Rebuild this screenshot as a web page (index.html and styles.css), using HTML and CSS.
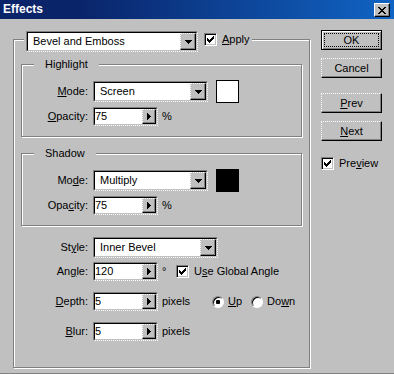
FILE: index.html
```html
<!DOCTYPE html>
<html lang="en">
<head>
    <meta charset="UTF-8">
    <title>Effects</title>
    <link rel="stylesheet" href="styles.css">
</head>
<body>

<div class="window">

    <!-- title bar -->
    <div class="titlebar">
        <span class="title">Effects</span>
        <button class="close" type="button">
            <svg width="8" height="7" viewBox="0 0 8 7"><path d="M0 0h2v1H0zM6 0h2v1H6zM1 1h2v1H1zM5 1h2v1H5zM2 2h4v1H2zM3 3h2v1H3zM2 4h4v1H2zM1 5h2v1H1zM5 5h2v1H5zM0 6h2v1H0zM6 6h2v1H6z"/></svg>
        </button>
    </div>

    <div class="client">

        <!-- effect settings -->
        <div class="group outer">
            <div class="legend top-legend">
                <div class="combo combo-effect">
                    <div class="combo-in">
                        <span class="combo-text">Bevel and Emboss</span>
                        <span class="combo-btn"><svg width="7" height="4" viewBox="0 0 7 4"><path d="M0 0h7v1H0zM1 1h5v1H1zM2 2h3v1H2zM3 3h1v1H3z"/></svg></span>
                    </div>
                </div>
                <label class="check check-apply">
                    <span class="box"><svg width="7" height="7" viewBox="0 0 7 7"><path d="M6 0h1v1H6zM5 1h2v1H5zM0 2h1v1H0zM4 2h3v1H4zM0 3h2v1H0zM3 3h3v1H3zM0 4h5v1H0zM1 5h3v1H1zM2 6h1v1H2z"/></svg></span>
                    <span><u>A</u>pply</span>
                </label>
            </div>

            <!-- highlight -->
            <div class="group sub">
                <div class="legend sub-legend">Highlight</div>
                <div class="row mode-row">
                    <span class="lbl"><u>M</u>ode:</span>
                    <div class="combo combo-mode">
                        <div class="combo-in">
                            <span class="combo-text">Screen</span>
                            <span class="combo-btn"><svg width="7" height="4" viewBox="0 0 7 4"><path d="M0 0h7v1H0zM1 1h5v1H1zM2 2h3v1H2zM3 3h1v1H3z"/></svg></span>
                        </div>
                    </div>
                    <span class="swatch swatch-white"></span>
                </div>
                <div class="row opacity-row">
                    <span class="lbl"><u>O</u>pacity:</span>
                    <div class="spin">
                        <div class="spin-in">
                            <span class="spin-val">75</span>
                            <span class="spin-btn"><svg width="4" height="7" viewBox="0 0 4 7"><path d="M0 0h1v7H0zM1 1h1v5H1zM2 2h1v3H2zM3 3h1v1H3z"/></svg></span>
                        </div>
                    </div>
                    <span class="unit">%</span>
                </div>
            </div>

            <!-- shadow -->
            <div class="group sub sub-shadow">
                <div class="legend sub-legend">Shadow</div>
                <div class="row mode-row">
                    <span class="lbl">Mo<u>d</u>e:</span>
                    <div class="combo combo-mode">
                        <div class="combo-in">
                            <span class="combo-text">Multiply</span>
                            <span class="combo-btn"><svg width="7" height="4" viewBox="0 0 7 4"><path d="M0 0h7v1H0zM1 1h5v1H1zM2 2h3v1H2zM3 3h1v1H3z"/></svg></span>
                        </div>
                    </div>
                    <span class="swatch swatch-black"></span>
                </div>
                <div class="row opacity-row">
                    <span class="lbl">Opa<u>c</u>ity:</span>
                    <div class="spin">
                        <div class="spin-in">
                            <span class="spin-val">75</span>
                            <span class="spin-btn"><svg width="4" height="7" viewBox="0 0 4 7"><path d="M0 0h1v7H0zM1 1h1v5H1zM2 2h1v3H2zM3 3h1v1H3z"/></svg></span>
                        </div>
                    </div>
                    <span class="unit">%</span>
                </div>
            </div>

            <!-- bevel options -->
            <div class="row style-row">
                <span class="lbl">St<u>y</u>le:</span>
                <div class="combo combo-style">
                    <div class="combo-in">
                        <span class="combo-text">Inner Bevel</span>
                        <span class="combo-btn"><svg width="7" height="4" viewBox="0 0 7 4"><path d="M0 0h7v1H0zM1 1h5v1H1zM2 2h3v1H2zM3 3h1v1H3z"/></svg></span>
                    </div>
                </div>
            </div>

            <div class="row angle-row">
                <span class="lbl">An<u>g</u>le:</span>
                <div class="spin">
                    <div class="spin-in">
                        <span class="spin-val">120</span>
                        <span class="spin-btn"><svg width="4" height="7" viewBox="0 0 4 7"><path d="M0 0h1v7H0zM1 1h1v5H1zM2 2h1v3H2zM3 3h1v1H3z"/></svg></span>
                    </div>
                </div>
                <span class="unit unit-deg">°</span>
                <label class="check">
                    <span class="box"><svg width="7" height="7" viewBox="0 0 7 7"><path d="M6 0h1v1H6zM5 1h2v1H5zM0 2h1v1H0zM4 2h3v1H4zM0 3h2v1H0zM3 3h3v1H3zM0 4h5v1H0zM1 5h3v1H1zM2 6h1v1H2z"/></svg></span>
                    <span>U<u>s</u>e Global Angle</span>
                </label>
            </div>

            <div class="row depth-row">
                <span class="lbl"><u>D</u>epth:</span>
                <div class="spin">
                    <div class="spin-in">
                        <span class="spin-val">5</span>
                        <span class="spin-btn"><svg width="4" height="7" viewBox="0 0 4 7"><path d="M0 0h1v7H0zM1 1h1v5H1zM2 2h1v3H2zM3 3h1v1H3z"/></svg></span>
                    </div>
                </div>
                <span class="unit unit-px">pixels</span>
                <label class="radio-item radio-up">
                    <span class="radio"><span class="dot"></span></span>
                    <span><u>U</u>p</span>
                </label>
                <label class="radio-item">
                    <span class="radio"></span>
                    <span>Do<u>w</u>n</span>
                </label>
            </div>

            <div class="row blur-row">
                <span class="lbl"><u>B</u>lur:</span>
                <div class="spin">
                    <div class="spin-in">
                        <span class="spin-val">5</span>
                        <span class="spin-btn"><svg width="4" height="7" viewBox="0 0 4 7"><path d="M0 0h1v7H0zM1 1h1v5H1zM2 2h1v3H2zM3 3h1v1H3z"/></svg></span>
                    </div>
                </div>
                <span class="unit">pixels</span>
            </div>
        </div>

        <!-- dialog buttons -->
        <div class="side">
            <button class="btn btn-default" type="button">OK</button>
            <button class="btn btn-cancel" type="button">Cancel</button>
            <button class="btn btn-prev" type="button"><u>P</u>rev</button>
            <button class="btn btn-next" type="button"><u>N</u>ext</button>
            <label class="check check-preview">
                <span class="box"><svg width="7" height="7" viewBox="0 0 7 7"><path d="M6 0h1v1H6zM5 1h2v1H5zM0 2h1v1H0zM4 2h3v1H4zM0 3h2v1H0zM3 3h3v1H3zM0 4h5v1H0zM1 5h3v1H1zM2 6h1v1H2z"/></svg></span>
                <span>Pre<u>v</u>iew</span>
            </label>
        </div>

    </div>
</div>

</body>
</html>
```

FILE: styles.css
```css
* {
    box-sizing: border-box;
    margin: 0;
    padding: 0;
}

body {
    width: 394px;
    height: 374px;
    overflow: hidden;
    background-color: #c0c0c0;
    font: 11px/13px "Liberation Sans", Arial, sans-serif;
    color: #000;
}

u {
    text-decoration: underline;
    text-underline-offset: 1px;
}

.window {
    width: 394px;
    height: 374px;
    border-bottom: 1px solid #808080;
}

/* title bar */
.titlebar {
    height: 19px;
    display: flex;
    align-items: flex-start;
    justify-content: space-between;
    padding: 0 4px 0 3px;
    background: linear-gradient(90deg, #0a246a 0%, #0a246a 20%, #1064c4 100%);
}

.title {
    font-weight: bold;
    font-size: 12px;
    line-height: 19px;
    color: #fff;
}

.close {
    width: 16px;
    height: 14px;
    margin-top: 3px;
    display: flex;
    align-items: center;
    justify-content: center;
    background-color: #c0c0c0;
    border: 1px solid;
    border-color: #fff #000 #000 #fff;
    box-shadow: inset -1px -1px #808080;
}

.client {
    display: flex;
    align-items: flex-start;
}

/* etched group boxes */
.group {
    border: 1px solid #808080;
    box-shadow: inset 1px 1px #fff, 1px 1px #fff;
}

.legend {
    width: max-content;
    background-color: #c0c0c0;
}

.outer {
    width: 297px;
    height: 329px;
    margin: 20px 0 0 13px;
}

.top-legend {
    display: flex;
    align-items: flex-start;
    margin: -9px 0 0 10px;
    padding: 0 2px;
}

.sub {
    width: 281px;
    height: 73px;
    margin: 12px 0 0 7px;
}

.sub-shadow {
    margin-top: 16px;
}

.sub-legend {
    margin: -7px 0 0 12px;
    padding: 0 11px;
}

/* rows */
.row {
    display: flex;
    align-items: center;
}

.lbl {
    flex: none;
    width: 79px;
    padding-right: 5px;
    text-align: right;
}

.sub .lbl {
    width: 71px;
}

.mode-row {
    margin-top: 10px;
}

.opacity-row {
    margin-top: 5px;
}

.style-row {
    margin-top: 11px;
}

.angle-row {
    margin-top: 4px;
}

.depth-row,
.blur-row {
    margin-top: 11px;
}

/* combo box */
.combo {
    height: 21px;
    border: 1px solid;
    border-style: solid dotted dotted solid;
    border-color: #808080 #fff #fff #808080;
}

.combo-effect {
    width: 172px;
}

.combo-mode {
    width: 115px;
}

.combo-style {
    width: 125px;
}

.combo-in {
    height: 100%;
    display: flex;
    background-color: #fff;
    border: 1px solid;
    border-color: #000 #c0c0c0 #c0c0c0 #000;
}

.combo-text {
    flex: 1;
    padding-left: 5px;
    line-height: 17px;
    white-space: nowrap;
}

.combo-btn {
    width: 16px;
    height: 17px;
    display: flex;
    align-items: center;
    justify-content: center;
    background-color: #c0c0c0;
    border: 1px solid;
    border-style: dotted solid solid dotted;
    border-color: #fff #000 #000 #fff;
    box-shadow: inset -1px -1px #808080;
}

/* colour swatch */
.swatch {
    width: 23px;
    height: 23px;
    margin: -1px 0 -1px 8px;
    border: 1px solid #000;
}

.swatch-white {
    background-color: #fff;
}

.swatch-black {
    background-color: #000;
}

/* numeric field with popup arrow */
.spin {
    width: 65px;
    height: 19px;
    border: 1px solid;
    border-style: solid dotted dotted solid;
    border-color: #808080 #fff #fff #808080;
}

.spin-in {
    height: 100%;
    display: flex;
    background-color: #fff;
    border: 1px solid;
    border-color: #000 #c0c0c0 #c0c0c0 #000;
}

.spin-val {
    flex: 1;
    line-height: 15px;
}

.spin-btn {
    width: 14px;
    display: flex;
    align-items: center;
    justify-content: center;
    background-color: #c0c0c0;
    border: 1px solid;
    border-style: dotted solid solid dotted;
    border-color: #fff #000 #000 #fff;
    box-shadow: inset -1px -1px #808080;
}

.unit {
    margin-left: 4px;
}

.unit-deg {
    width: 14px;
}

.unit-px {
    width: 50px;
}

/* check box */
.check {
    display: flex;
    align-items: center;
    gap: 5px;
}

.check-apply {
    margin: 2px 0 0 6px;
}

.box {
    width: 13px;
    height: 13px;
    display: flex;
    align-items: center;
    justify-content: center;
    background-color: #fff;
    border: 1px solid;
    border-style: solid dotted dotted solid;
    border-color: #808080 #fff #fff #808080;
    box-shadow: inset 1px 1px #000, inset -1px -1px #c0c0c0;
}

/* radio */
.radio-item {
    display: flex;
    align-items: center;
    gap: 4px;
}

.radio-up {
    margin-right: 9px;
}

.radio {
    width: 12px;
    height: 12px;
    display: flex;
    align-items: center;
    justify-content: center;
    border-radius: 50%;
    background-color: #fff;
    border: 1px solid;
    border-color: #808080 #fff #fff #808080;
    box-shadow: inset 1px 1px #000;
}

.dot {
    width: 4px;
    height: 4px;
    border-radius: 1px;
    background-color: #000;
}

/* buttons */
.side {
    width: 61px;
    margin: 11px 0 0 11px;
    display: flex;
    flex-direction: column;
}

.btn {
    width: 61px;
    height: 20px;
    font: inherit;
    color: #000;
    background-color: #c0c0c0;
    border: 1px solid;
    border-style: dotted solid solid dotted;
    border-color: #fff #000 #000 #fff;
    box-shadow: inset -1px -1px #808080;
}

.btn-default {
    border: 1px solid #000;
    box-shadow: inset 1px 1px #fff, inset -1px -1px #808080;
    outline: 1px dotted #000;
    outline-offset: -4px;
}

.btn-cancel {
    margin-top: 8px;
}

.btn-prev {
    margin-top: 15px;
}

.btn-next {
    margin-top: 8px;
}

.check-preview {
    margin-top: 16px;
}
```
